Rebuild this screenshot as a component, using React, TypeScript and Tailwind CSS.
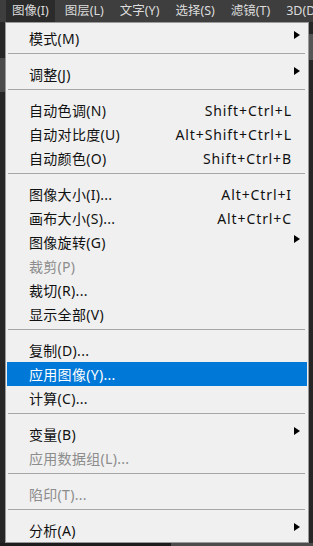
import React from 'react';

type Item =
  | { kind: 'sep' }
  | {
      kind: 'item';
      label: string;
      shortcut?: string;
      sub?: boolean;
      disabled?: boolean;
      active?: boolean;
    };

const topMenus = ['图像(I)', '图层(L)', '文字(Y)', '选择(S)', '滤镜(T)', '3D(D)'];

const items: Item[] = [
  { kind: 'item', label: '模式(M)', sub: true },
  { kind: 'sep' },
  { kind: 'item', label: '调整(J)', sub: true },
  { kind: 'sep' },
  { kind: 'item', label: '自动色调(N)', shortcut: 'Shift+Ctrl+L' },
  { kind: 'item', label: '自动对比度(U)', shortcut: 'Alt+Shift+Ctrl+L' },
  { kind: 'item', label: '自动颜色(O)', shortcut: 'Shift+Ctrl+B' },
  { kind: 'sep' },
  { kind: 'item', label: '图像大小(I)...', shortcut: 'Alt+Ctrl+I' },
  { kind: 'item', label: '画布大小(S)...', shortcut: 'Alt+Ctrl+C' },
  { kind: 'item', label: '图像旋转(G)', sub: true },
  { kind: 'item', label: '裁剪(P)', disabled: true },
  { kind: 'item', label: '裁切(R)...' },
  { kind: 'item', label: '显示全部(V)' },
  { kind: 'sep' },
  { kind: 'item', label: '复制(D)...' },
  { kind: 'item', label: '应用图像(Y)...', active: true },
  { kind: 'item', label: '计算(C)...' },
  { kind: 'sep' },
  { kind: 'item', label: '变量(B)', sub: true },
  { kind: 'item', label: '应用数据组(L)...', disabled: true },
  { kind: 'sep' },
  { kind: 'item', label: '陷印(T)...', disabled: true },
  { kind: 'sep' },
  { kind: 'item', label: '分析(A)', sub: true },
];

const Arrow: React.FC<{ color: string }> = ({ color }) => (
  <svg width="6" height="8" viewBox="0 0 6 8" className="mb-[6px]">
    <path d="M0 0 L6 4 L0 8 Z" fill={color} />
  </svg>
);

export default function App() {
  return (
    <div className="w-[313px] h-[546px] overflow-hidden flex flex-col bg-[#262626] font-['Noto_Sans','Noto_Sans_CJK_SC',sans-serif]">
      {/* top menu bar */}
      <div className="h-[22px] flex-shrink-0 flex items-stretch bg-[#3e3e3e] text-[12.5px] text-[#dcdcdc] pl-[6px] overflow-hidden">
        {topMenus.map((m, i) => (
          <div
            key={m}
            className={`flex items-center px-[6px] mr-[4px] whitespace-nowrap flex-shrink-0 ${
              i === 0 ? 'bg-[#2b2b2b]' : ''
            }`}
          >
            {m}
          </div>
        ))}
      </div>

      <div className="flex-1 flex">
        {/* left strip */}
        <div className="w-[5px] flex flex-col">
          <div className="h-[36px]" />
          <div className="h-[34px] bg-[#4a4a4a]" />
        </div>

        {/* menu panel */}
        <div className="w-[304px] h-[521px] bg-[#f0f0f0] border border-[#9a9a9a] pt-[3px] text-[14px] text-[#111]">
          {items.map((it, i) =>
            it.kind === 'sep' ? (
              <div key={i} className="h-[12px] pt-[3px] pl-[2px] pr-[3px]">
                <div className="h-px bg-[#a6a6a6]" />
              </div>
            ) : (
              <div
                key={i}
                className={`h-[24px] mx-[1px] flex items-center pl-[22px] pr-[7px] tracking-[0.3px] ${
                  it.active ? 'bg-[#0078d7] text-white' : ''
                } ${it.disabled ? 'text-[#8c8c8c]' : ''}`}
              >
                <span className="flex-1 whitespace-nowrap">{it.label}</span>
                {it.shortcut && (
                  <span className="whitespace-nowrap mr-[8px] tracking-[0.9px]">{it.shortcut}</span>
                )}
                {it.sub && <Arrow color={it.active ? '#fff' : '#000'} />}
              </div>
            )
          )}
        </div>

        {/* right strip */}
        <div className="flex-1 flex flex-col">
          <div className="h-[12px]" />
          <div className="h-[26px] bg-[#555]" />
        </div>
      </div>

      <div className="h-[3px] flex">
        <div className="w-[171px] bg-[#1c1c1c]" />
        <div className="flex-1 bg-[#4b4b4b]" />
      </div>
    </div>
  );
}
